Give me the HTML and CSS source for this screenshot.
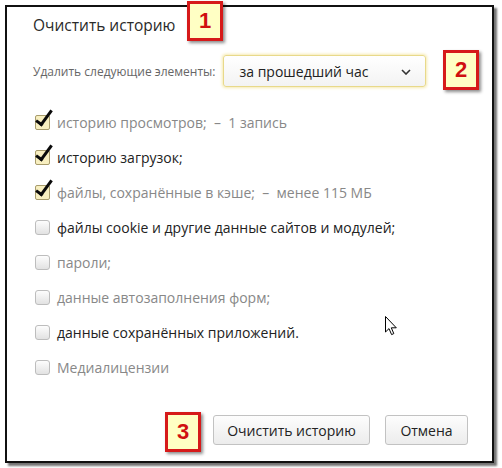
FILE: index.html
```html
<!DOCTYPE html>
<html lang="ru">
<head>
    <meta charset="UTF-8">
    <title>Очистить историю</title>
    <link rel="stylesheet" href="styles.css">
</head>
<body>
    <div id="dialog">
        <h1 class="title">Очистить историю</h1>

        <div class="period">
            <span class="period-label">Удалить следующие элементы:</span>
            <div class="select">
                <span>за прошедший час</span>
                <svg class="chevron" width="10" height="6" viewBox="0 0 10 6"><path d="M1 1 L5 5 L9 1" fill="none" stroke="#333" stroke-width="1.6"/></svg>
            </div>
        </div>

        <ul class="items">
            <li class="item muted"><span class="box checked"></span>историю просмотров;&nbsp; –&nbsp; 1 запись</li>
            <li class="item"><span class="box checked"></span>историю загрузок;</li>
            <li class="item muted"><span class="box checked"></span>файлы, сохранённые в кэше;&nbsp; –&nbsp; менее 115 МБ</li>
            <li class="item"><span class="box"></span>файлы cookie и другие данные сайтов и модулей;</li>
            <li class="item muted"><span class="box"></span>пароли;</li>
            <li class="item muted"><span class="box"></span>данные автозаполнения форм;</li>
            <li class="item"><span class="box"></span>данные сохранённых приложений.</li>
            <li class="item muted"><span class="box"></span>Медиалицензии</li>
        </ul>

        <div class="actions">
            <button class="btn btn-clear">Очистить историю</button>
            <button class="btn btn-cancel">Отмена</button>
        </div>
    </div>

    <!-- пометки поверх скриншота -->
    <div class="badge badge-1">1</div>
    <div class="badge badge-2">2</div>
    <div class="badge badge-3">3</div>

    <svg class="cursor" width="13" height="20" viewBox="0 0 13 20">
        <path d="M0.5 0.5 L0.5 16 L4 12.6 L6.6 18.6 L8.8 17.6 L6.3 11.8 L11.3 11.8 Z" fill="#fff" stroke="#000" stroke-width="1" stroke-linejoin="miter"/>
    </svg>
</body>
</html>
```

FILE: styles.css
```css
/* Страница */
body {
    margin: 0;
    padding: 5px;
    background: #fff;
    font-family: 'Open Sans', 'Noto Sans', sans-serif;
    color: #222;
    position: relative;
    width: 502px;
    height: 468px;
    box-sizing: border-box;
    overflow: hidden;
}

/* Окно диалога */
#dialog {
    width: 489px;
    height: 458px;
    box-sizing: border-box;
    border: 2px solid #111;
    box-shadow: 3px 3px 2px rgba(0, 0, 0, 0.55);
    padding: 8px 24px 0 26px;
    background: #fff;
    display: flex;
    flex-direction: column;
}

.title {
    margin: 0;
    font-size: 15.5px;
    font-weight: normal;
    line-height: 20px;
    color: #2a2a2a;
}

/* Период */
.period {
    display: flex;
    align-items: center;
    gap: 8px;
    margin-top: 20px;
}

.period-label {
    font-size: 12px;
    color: #666;
}

.select {
    width: 203px;
    height: 32px;
    box-sizing: border-box;
    border: 1px solid #e8d98a;
    border-radius: 3px;
    box-shadow: 0 0 3px 1px #f6eab0;
    background: linear-gradient(#fff, #f3f3f3);
    display: flex;
    align-items: center;
    justify-content: space-between;
    padding: 0 14px 0 15px;
    font-size: 14px;
    color: #222;
}

.chevron {
    margin-top: 1px;
}

/* Список */
.items {
    list-style: none;
    margin: 18px 0 0;
    padding: 0 0 0 2px;
}

.item {
    height: 35px;
    display: flex;
    align-items: center;
    gap: 7px;
    font-size: 14px;
    color: #222;
}

.item.muted {
    color: #888;
}

.box {
    width: 13px;
    height: 13px;
    border: 1px solid #bdbdbd;
    border-radius: 3px;
    background: linear-gradient(#fdfdfd, #e2e2e2);
    position: relative;
    flex-shrink: 0;
}

.box.checked {
    border-color: #a89c6c;
    border-radius: 2px;
    background: #f8efc0;
}

.box.checked::after {
    content: '';
    position: absolute;
    left: 4px;
    top: -9px;
    width: 5px;
    height: 16px;
    border: solid #0a0a0a;
    border-width: 0 3.5px 3.5px 0;
    transform: rotate(36deg);
}

/* Кнопки */
.actions {
    margin-top: auto;
    margin-bottom: 16px;
    display: flex;
    justify-content: flex-end;
    gap: 15px;
}

.btn {
    height: 30px;
    padding: 0;
    font-family: inherit;
    font-size: 14px;
    color: #222;
    white-space: nowrap;
    border: 1px solid #c2c2c2;
    border-radius: 3px;
    background: linear-gradient(#fdfdfd, #ececec);
}

.btn-clear {
    width: 157px;
}

.btn-cancel {
    width: 83px;
}

/* Пометки */
.badge {
    position: absolute;
    width: 30px;
    height: 34px;
    border: 3px solid #d61a1a;
    background: #ffffc4;
    box-shadow: 2px 2px 3px rgba(0, 0, 0, 0.45);
    color: #d01010;
    font-family: 'Liberation Sans', Arial, sans-serif;
    font-weight: bold;
    font-size: 22px;
    display: flex;
    align-items: center;
    justify-content: center;
}

.badge-1 {
    left: 187px;
    top: 1px;
}

.badge-2 {
    left: 443px;
    top: 50px;
}

.badge-3 {
    left: 165px;
    top: 412px;
}

.cursor {
    position: absolute;
    left: 385px;
    top: 316px;
}
```
